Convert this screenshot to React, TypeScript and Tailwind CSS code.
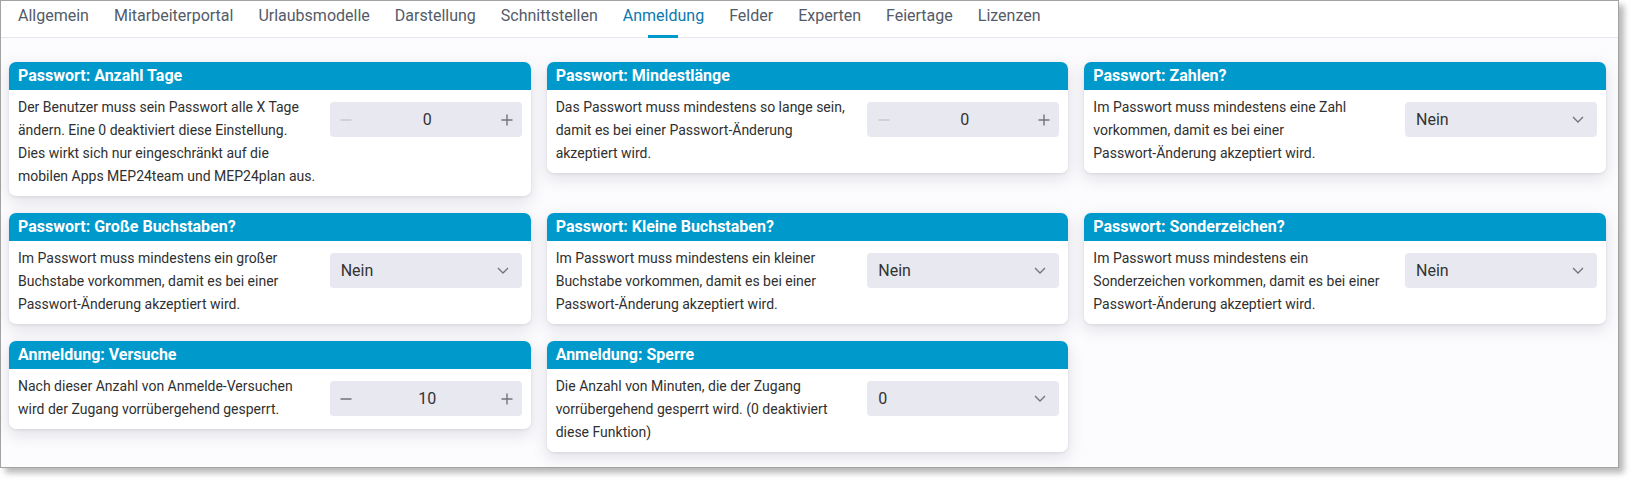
import React from "react";

type Setting = {
  title: string;
  lines: string[];
  kind: "stepper" | "select";
  value: string;
  disabledMinus?: boolean;
};

const tabs = [
  "Allgemein",
  "Mitarbeiterportal",
  "Urlaubsmodelle",
  "Darstellung",
  "Schnittstellen",
  "Anmeldung",
  "Felder",
  "Experten",
  "Feiertage",
  "Lizenzen",
];

const settings: Setting[] = [
  {
    title: "Passwort: Anzahl Tage",
    lines: [
      "Der Benutzer muss sein Passwort alle X Tage",
      "ändern. Eine 0 deaktiviert diese Einstellung.",
      "Dies wirkt sich nur eingeschränkt auf die",
      "mobilen Apps MEP24team und MEP24plan aus.",
    ],
    kind: "stepper",
    value: "0",
    disabledMinus: true,
  },
  {
    title: "Passwort: Mindestlänge",
    lines: [
      "Das Passwort muss mindestens so lange sein,",
      "damit es bei einer Passwort-Änderung",
      "akzeptiert wird.",
    ],
    kind: "stepper",
    value: "0",
    disabledMinus: true,
  },
  {
    title: "Passwort: Zahlen?",
    lines: [
      "Im Passwort muss mindestens eine Zahl",
      "vorkommen, damit es bei einer",
      "Passwort-Änderung akzeptiert wird.",
    ],
    kind: "select",
    value: "Nein",
  },
  {
    title: "Passwort: Große Buchstaben?",
    lines: [
      "Im Passwort muss mindestens ein großer",
      "Buchstabe vorkommen, damit es bei einer",
      "Passwort-Änderung akzeptiert wird.",
    ],
    kind: "select",
    value: "Nein",
  },
  {
    title: "Passwort: Kleine Buchstaben?",
    lines: [
      "Im Passwort muss mindestens ein kleiner",
      "Buchstabe vorkommen, damit es bei einer",
      "Passwort-Änderung akzeptiert wird.",
    ],
    kind: "select",
    value: "Nein",
  },
  {
    title: "Passwort: Sonderzeichen?",
    lines: [
      "Im Passwort muss mindestens ein",
      "Sonderzeichen vorkommen, damit es bei einer",
      "Passwort-Änderung akzeptiert wird.",
    ],
    kind: "select",
    value: "Nein",
  },
  {
    title: "Anmeldung: Versuche",
    lines: [
      "Nach dieser Anzahl von Anmelde-Versuchen",
      "wird der Zugang vorrübergehend gesperrt.",
    ],
    kind: "stepper",
    value: "10",
  },
  {
    title: "Anmeldung: Sperre",
    lines: [
      "Die Anzahl von Minuten, die der Zugang",
      "vorrübergehend gesperrt wird. (0 deaktiviert",
      "diese Funktion)",
    ],
    kind: "select",
    value: "0",
  },
];

function Stepper({ value, disabledMinus }: { value: string; disabledMinus?: boolean }) {
  return (
    <div className="flex h-[35px] w-[192px] shrink-0 items-center rounded-[4px] bg-[#e8e8f0] mt-[6px]">
      <div className="flex h-full w-[33px] items-center justify-center">
        <svg width="12" height="12" viewBox="0 0 12 12">
          <path d="M0.5 6h11" stroke={disabledMinus ? "#c9cad3" : "#70737d"} strokeWidth="1.4" />
        </svg>
      </div>
      <div className="flex-1 text-center text-[16px] text-[#333]">{value}</div>
      <div className="flex h-full w-[30px] items-center justify-center">
        <svg width="12" height="12" viewBox="0 0 12 12">
          <path d="M0.5 6h11M6 0.5v11" stroke="#70737d" strokeWidth="1.4" />
        </svg>
      </div>
    </div>
  );
}

function SelectBox({ value }: { value: string }) {
  return (
    <div className="flex h-[35px] w-[192px] shrink-0 items-center justify-between rounded-[4px] bg-[#e8e8f0] pl-[11px] pr-[13px] mt-[6px]">
      <span className="text-[16px] text-[#333]">{value}</span>
      <svg width="12" height="7" viewBox="0 0 12 7">
        <path d="M1 1l5 5 5-5" fill="none" stroke="#70737d" strokeWidth="1.3" />
      </svg>
    </div>
  );
}

function SettingCard({ s }: { s: Setting }) {
  return (
    <div className="overflow-hidden rounded-[7px] bg-white shadow-[0_5px_16px_rgba(60,60,100,0.16),0_1px_3px_rgba(0,0,0,0.08)]">
      <div className="h-[28px] bg-[#0099cc] px-[9px] text-[16px] font-bold leading-[28px] text-white">
        {s.title}
      </div>
      <div className="flex items-start justify-between gap-3 px-[9px] pt-[6px] pb-[8px]">
        <div className="text-[14px] leading-[23px] text-[#303030]">
          {s.lines.map((l) => (
            <div key={l} className="whitespace-nowrap">
              {l}
            </div>
          ))}
        </div>
        {s.kind === "stepper" ? (
          <Stepper value={s.value} disabledMinus={s.disabledMinus} />
        ) : (
          <SelectBox value={s.value} />
        )}
      </div>
    </div>
  );
}

export default function App() {
  return (
    <div className="min-h-screen bg-white font-['Roboto','Noto_Sans',sans-serif]">
      <div className="flex h-[468px] w-[1619px] flex-col border border-[#a3a3a3] bg-white shadow-[5px_5px_6px_rgba(0,0,0,0.28)]">
        {/* tabs */}
        <nav className="flex h-[37px] shrink-0 border-b border-[#e6e6ea] pl-[4.5px]">
          {tabs.map((t) => {
            const active = t === "Anmeldung";
            return (
              <div
                key={t}
                className={
                  "relative h-full px-[12.5px] pt-[3px] text-[16px] leading-6 " +
                  (active ? "text-[#0b79ae]" : "text-[#545b68]")
                }
              >
                {t}
                {active && (
                  <div className="absolute bottom-[-1px] left-1/2 h-[3px] w-[30px] -translate-x-1/2 bg-[#0099cc]" />
                )}
              </div>
            );
          })}
        </nav>

        {/* cards */}
        <div className="grid flex-1 grid-cols-3 content-start items-start gap-x-4 gap-y-[17px] bg-[#fcfcfe] pt-6 pl-2 pr-3">
          {settings.map((s) => (
            <SettingCard key={s.title} s={s} />
          ))}
        </div>
      </div>
    </div>
  );
}
